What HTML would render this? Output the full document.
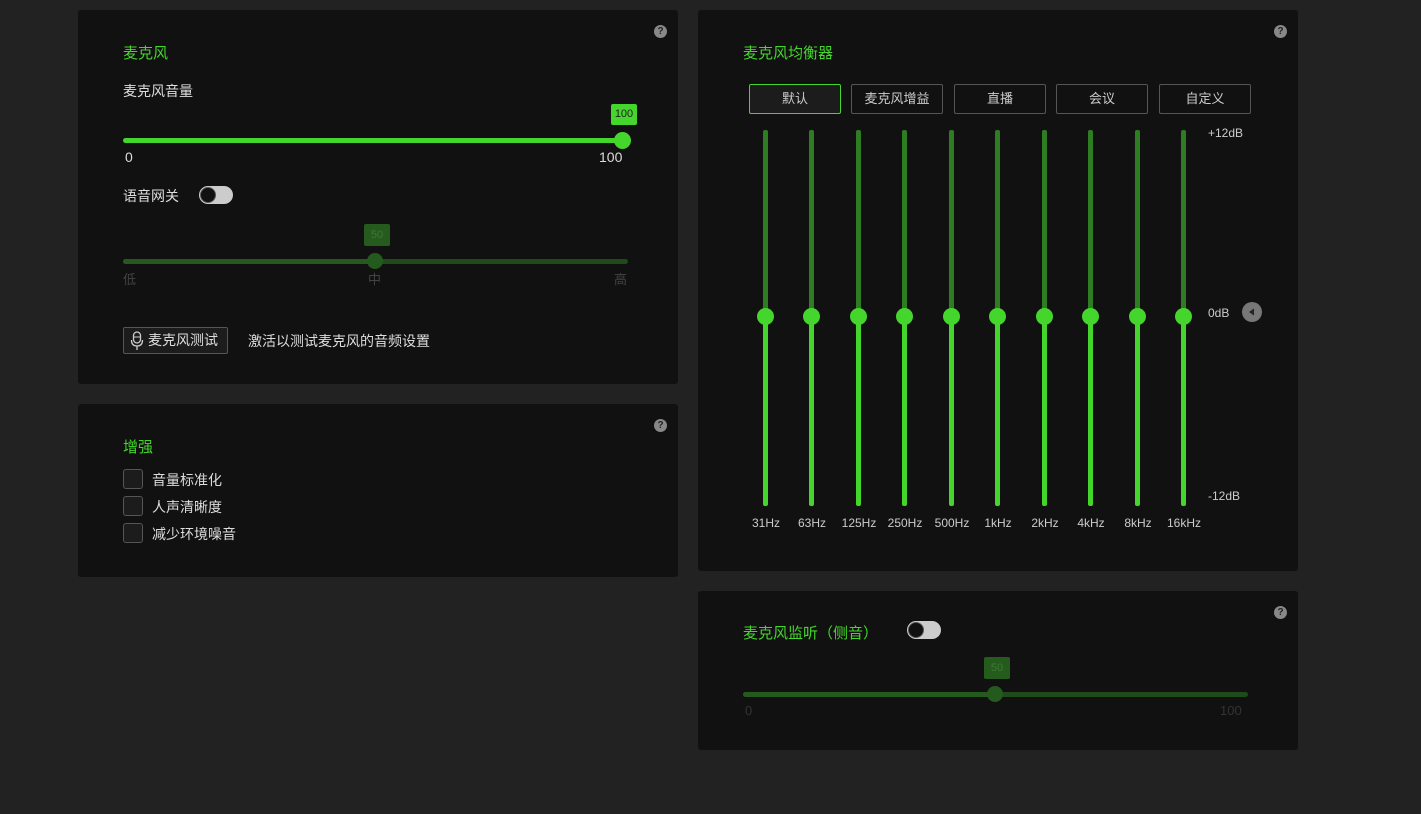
<!DOCTYPE html>
<html><head><meta charset="utf-8"><style>
*{margin:0;padding:0;box-sizing:border-box}
body{width:1421px;height:814px;background:#222;font-family:"Liberation Sans","Noto Sans CJK SC",sans-serif;color:#ddd;position:relative;overflow:hidden;font-size:14px}
.a{position:absolute}
.p{position:absolute;background:#111;border-radius:3px}
.t{color:#44d62c;font-size:15px}
.q{position:absolute;width:13px;height:13px;border-radius:50%;background:#888;color:#222;font-size:10px;line-height:13px;text-align:center;font-weight:bold}
.tog{position:absolute;width:34px;height:18px;border-radius:9px;background:#ccc}
.tog:after{content:"";position:absolute;left:1px;top:1px;width:16px;height:16px;border-radius:50%;background:#111;border:1px solid #555;box-sizing:border-box}
.cb{position:absolute;width:20px;height:20px;border:1px solid #555;border-radius:3px;background:#1c1c1c}
.btn{position:absolute;top:84px;height:30px;width:92px;border:1px solid #555;border-radius:2px;text-align:center;line-height:28px;font-size:13px;color:#ccc}
.eq{position:absolute;top:130px;width:5px;height:376px;border-radius:2px;background:linear-gradient(#2e7d22 0,#2e7d22 186px,#44d62c 186px)}
.eq:after{content:"";position:absolute;left:-6px;top:178px;width:17px;height:17px;border-radius:50%;background:#44d62c}
.hz{position:absolute;top:516px;width:60px;text-align:center;font-size:12px;color:#ccc}
</style></head><body>
<div class="p" style="left:78px;top:10px;width:600px;height:374px"></div>
<div class="p" style="left:78px;top:404px;width:600px;height:173px"></div>
<div class="p" style="left:698px;top:10px;width:600px;height:561px"></div>
<div class="p" style="left:698px;top:591px;width:600px;height:159px"></div>

<div class="q" style="left:654px;top:25px">?</div>
<div class="q" style="left:654px;top:419px">?</div>
<div class="q" style="left:1274px;top:25px">?</div>
<div class="q" style="left:1274px;top:606px">?</div>

<div class="a t" style="left:123px;top:42px">麦克风</div>
<div class="a" style="left:123px;top:81px">麦克风音量</div>
<div class="a" style="left:611px;top:104px;width:26px;height:21px;background:#44d62c;border-radius:2px;color:#222;font-size:11px;text-align:center;line-height:21px">100</div>
<div class="a" style="left:123px;top:138px;width:505px;height:5px;border-radius:3px;background:#44d62c"></div>
<div class="a" style="left:614px;top:132px;width:17px;height:17px;border-radius:50%;background:#44d62c"></div>
<div class="a" style="left:125px;top:149px">0</div>
<div class="a" style="left:599px;top:149px">100</div>
<div class="a" style="left:123px;top:186px">语音网关</div>
<div class="tog" style="left:199px;top:186px"></div>
<div class="a" style="left:364px;top:224px;width:26px;height:22px;background:#265b1e;border-radius:2px;color:#3d7a32;font-size:11px;text-align:center;line-height:22px">50</div>
<div class="a" style="left:123px;top:259px;width:505px;height:5px;border-radius:3px;background:#1f4a1a"></div>
<div class="a" style="left:123px;top:259px;width:252px;height:5px;border-radius:3px;background:#245a1d"></div>
<div class="a" style="left:367px;top:253px;width:16px;height:16px;border-radius:50%;background:#245a1d"></div>
<div class="a" style="left:123px;top:269px;color:#444;font-size:13px">低</div>
<div class="a" style="left:368px;top:269px;color:#444;font-size:13px">中</div>
<div class="a" style="left:614px;top:269px;color:#444;font-size:13px">高</div>
<div class="a" style="left:123px;top:327px;width:105px;height:27px;border:1px solid #555;border-radius:2px;background:#1c1c1c;line-height:25px;padding-left:24px;color:#ddd">麦克风测试</div>
<svg class="a" style="left:130px;top:331px" width="14" height="20" viewBox="0 0 14 20"><rect x="3.5" y="1" width="7" height="11" rx="3.5" fill="none" stroke="#ccc" stroke-width="1.3"/><line x1="3.5" y1="6" x2="10.5" y2="6" stroke="#ccc" stroke-width="1"/><path d="M1.5 9 Q1.5 15 7 15 Q12.5 15 12.5 9" fill="none" stroke="#ccc" stroke-width="1.3"/><line x1="7" y1="15" x2="7" y2="19" stroke="#ccc" stroke-width="1.3"/></svg>
<div class="a" style="left:248px;top:331px">激活以测试麦克风的音频设置</div>

<div class="a t" style="left:123px;top:436px">增强</div>
<div class="cb" style="left:123px;top:469px"></div><div class="a" style="left:152px;top:470px">音量标准化</div>
<div class="cb" style="left:123px;top:496px"></div><div class="a" style="left:152px;top:497px">人声清晰度</div>
<div class="cb" style="left:123px;top:523px"></div><div class="a" style="left:152px;top:524px">减少环境噪音</div>

<div class="a t" style="left:743px;top:42px">麦克风均衡器</div>
<div class="btn" style="left:749px;border-color:#44d62c;background:#1c1c1c">默认</div>
<div class="btn" style="left:851px">麦克风增益</div>
<div class="btn" style="left:954px">直播</div>
<div class="btn" style="left:1056px">会议</div>
<div class="btn" style="left:1159px">自定义</div>
<div class="eq" style="left:763px"></div><div class="eq" style="left:809px"></div><div class="eq" style="left:856px"></div><div class="eq" style="left:902px"></div><div class="eq" style="left:949px"></div><div class="eq" style="left:995px"></div><div class="eq" style="left:1042px"></div><div class="eq" style="left:1088px"></div><div class="eq" style="left:1135px"></div><div class="eq" style="left:1181px"></div>
<div class="hz" style="left:736px">31Hz</div><div class="hz" style="left:782px">63Hz</div><div class="hz" style="left:829px">125Hz</div><div class="hz" style="left:875px">250Hz</div><div class="hz" style="left:922px">500Hz</div><div class="hz" style="left:968px">1kHz</div><div class="hz" style="left:1015px">2kHz</div><div class="hz" style="left:1061px">4kHz</div><div class="hz" style="left:1108px">8kHz</div><div class="hz" style="left:1154px">16kHz</div>
<div class="a" style="left:1208px;top:126px;font-size:12px;color:#ccc">+12dB</div>
<div class="a" style="left:1208px;top:306px;font-size:12px;color:#ccc">0dB</div>
<div class="a" style="left:1208px;top:489px;font-size:12px;color:#ccc">-12dB</div>
<div class="a" style="left:1242px;top:302px;width:20px;height:20px;border-radius:50%;background:#777"></div>
<svg class="a" style="left:1242px;top:302px" width="20" height="20"><path d="M7 10 L12 6.5 L12 13.5 Z" fill="#222"/></svg>

<div class="a t" style="left:743px;top:622px">麦克风监听（侧音）</div>
<div class="tog" style="left:907px;top:621px"></div>
<div class="a" style="left:984px;top:657px;width:26px;height:22px;background:#265b1e;border-radius:2px;color:#3d7a32;font-size:11px;text-align:center;line-height:22px">50</div>
<div class="a" style="left:743px;top:692px;width:505px;height:5px;border-radius:3px;background:#1f4a1a"></div>
<div class="a" style="left:743px;top:692px;width:252px;height:5px;border-radius:3px;background:#245a1d"></div>
<div class="a" style="left:987px;top:686px;width:16px;height:16px;border-radius:50%;background:#245a1d"></div>
<div class="a" style="left:745px;top:703px;color:#333;font-size:13px">0</div>
<div class="a" style="left:1220px;top:703px;color:#333;font-size:13px">100</div>
</body></html>
